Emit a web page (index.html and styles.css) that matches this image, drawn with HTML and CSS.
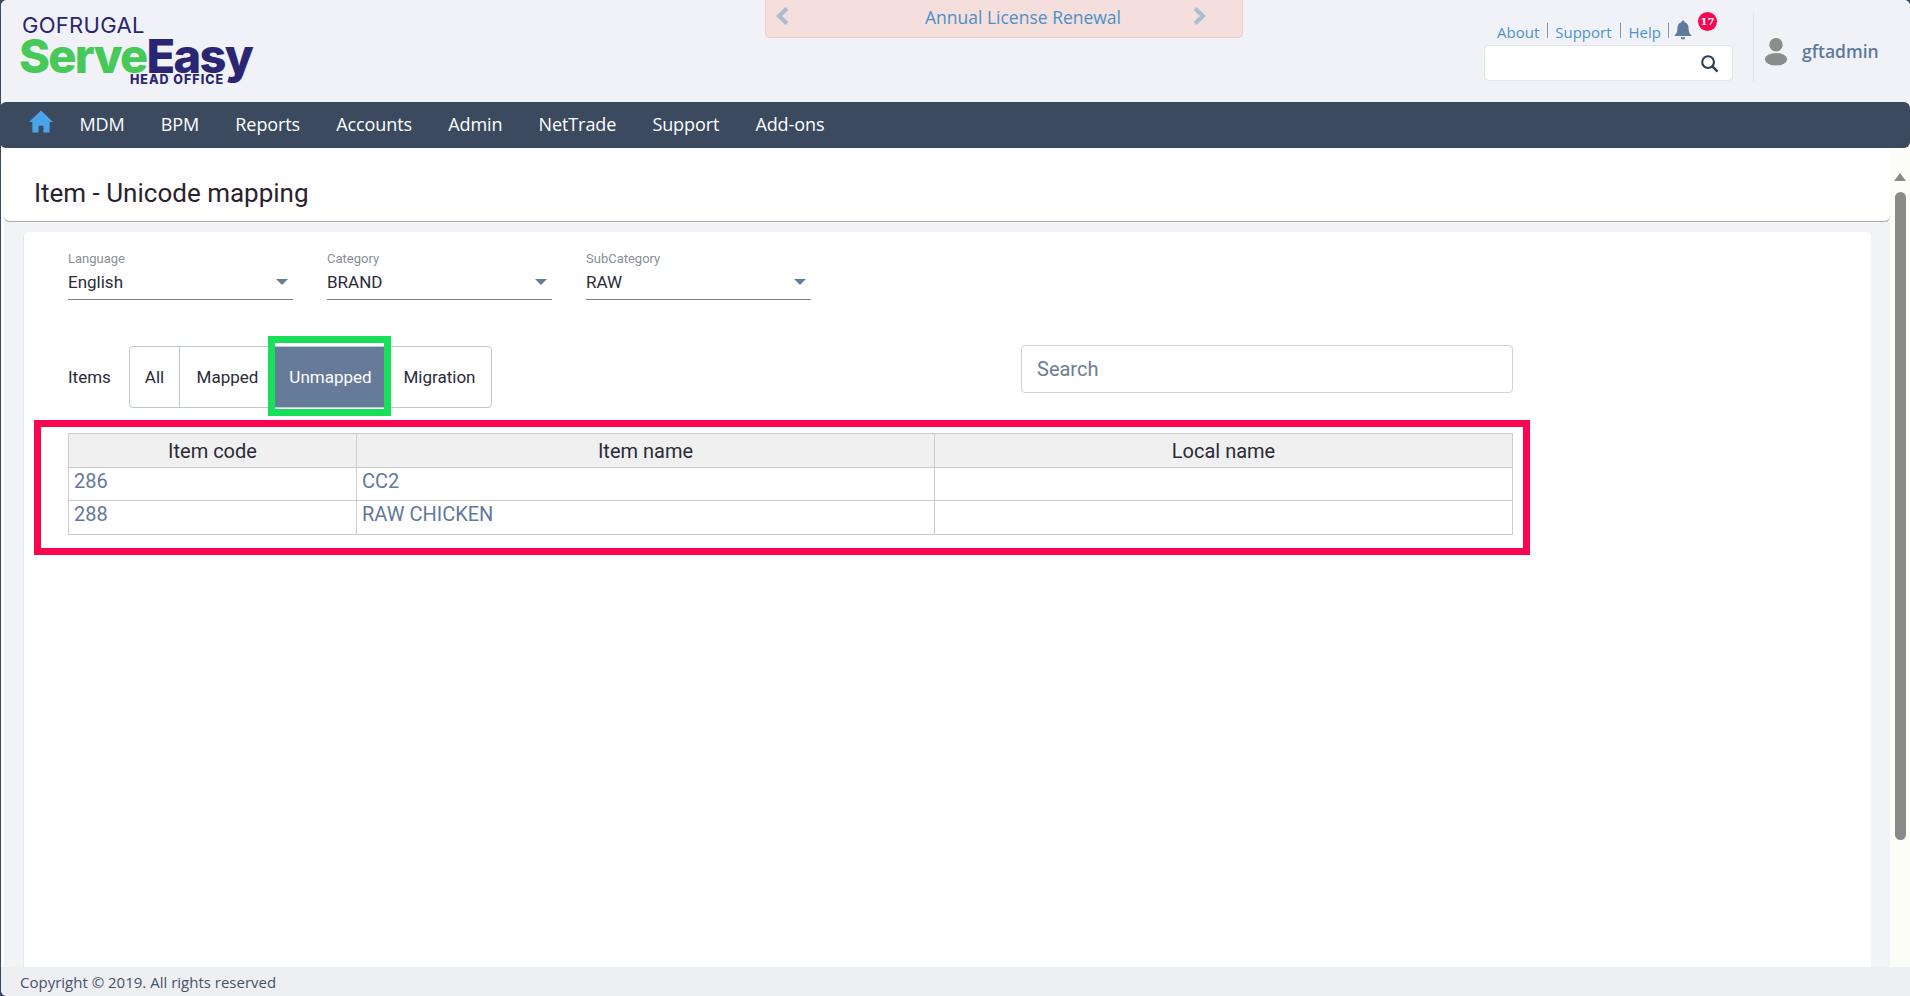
FILE: index.html
```html
<!DOCTYPE html>
<html lang="en">
<head>
<meta charset="utf-8">
<title>Item - Unicode mapping</title>
<link rel="stylesheet" href="styles.css">
</head>
<body>
<div class="app">
  <header class="topbar">
    <div class="logo">
      <div class="logo-brand">GOFRUGAL</div>
      <div class="logo-name"><span class="logo-serve">Serve</span><span class="logo-easy">Easy</span></div>
      <div class="logo-sub">HEAD OFFICE</div>
    </div>
    <div class="notice">
      <svg class="chev" viewBox="0 0 14 18" width="14" height="18"><path d="M11 1.5 3 9l8 7.5" fill="none" stroke="#a9bdd3" stroke-width="4"/></svg>
      <span class="notice-text">Annual License Renewal</span>
      <svg class="chev" viewBox="0 0 14 18" width="14" height="18"><path d="M3 1.5 11 9l-8 7.5" fill="none" stroke="#a9bdd3" stroke-width="4"/></svg>
    </div>
    <div class="top-tools">
      <div class="links">
        <a class="link">About</a><a class="link link-mid">Support</a><a class="link link-last">Help</a>
        <span class="bell-wrap">
          <svg viewBox="0 0 18 20" width="18" height="20"><path d="M9 0.5a1.6 1.6 0 0 1 1.6 1.7C13.4 3 14.6 5.3 14.6 8.4c0 3.4 1 5.1 2.6 6.6v1H.8v-1c1.6-1.5 2.6-3.200 2.600-6.600 0-3.100 1.200-5.400 4-6.200A1.600 1.600 0 0 1 9 .5zM6.800 17.200h4.400A2.200 2.200 0 0 1 9 19.500a2.200 2.200 0 0 1-2.200-2.300z" fill="#5f7a9b"/></svg>
          <span class="badge">17</span>
        </span>
      </div>
      <div class="top-search">
        <svg viewBox="0 0 20 20" width="19" height="19"><circle cx="8.500" cy="8.500" r="6.200" fill="none" stroke="#2c3e50" stroke-width="2.200"/><path d="m13 13 5.500 5.500" stroke="#2c3e50" stroke-width="2.600" fill="none"/></svg>
      </div>
    </div>
    <div class="user">
      <svg viewBox="0 0 24 30" width="24" height="29"><circle cx="12" cy="8" r="7" fill="#8c8c8c"/><ellipse cx="12" cy="23" rx="11.500" ry="6.500" fill="#8c8c8c"/></svg>
      <span class="user-name">gftadmin</span>
    </div>
  </header>

  <nav class="navbar">
    <svg class="home" viewBox="0 0 26 24" width="26" height="23"><path d="M13 0.500 0.500 12.500h3.500V23.500h6.500v-7h5v7H22V12.500h3.500z" fill="#4ba3ea"/></svg>
    <a class="nav-item">MDM</a>
    <a class="nav-item">BPM</a>
    <a class="nav-item">Reports</a>
    <a class="nav-item">Accounts</a>
    <a class="nav-item">Admin</a>
    <a class="nav-item">NetTrade</a>
    <a class="nav-item">Support</a>
    <a class="nav-item">Add-ons</a>
  </nav>

  <div class="body-row">
    <main class="main">
      <div class="title-card"><h1 class="title">Item - Unicode mapping</h1></div>
      <div class="panel-wrap">
        <section class="panel">
          <div class="filters">
            <div class="field">
              <div class="field-label">Language</div>
              <div class="field-control"><span>English</span><i class="caret"></i></div>
            </div>
            <div class="field">
              <div class="field-label">Category</div>
              <div class="field-control"><span>BRAND</span><i class="caret"></i></div>
            </div>
            <div class="field">
              <div class="field-label">SubCategory</div>
              <div class="field-control"><span>RAW</span><i class="caret"></i></div>
            </div>
          </div>

          <div class="toolbar">
            <span class="items-label">Items</span>
            <div class="tabs">
              <span class="tab tab-all">All</span>
              <span class="tab tab-mapped">Mapped</span>
              <span class="tab tab-active">Unmapped<b class="mark mark-green"></b></span>
              <span class="tab tab-migration">Migration</span>
            </div>
            <div class="search-box">Search</div>
          </div>

          <div class="table-wrap">
            <table class="grid">
              <colgroup><col class="col-code"><col class="col-name"><col class="col-local"></colgroup>
              <thead><tr><th>Item code</th><th>Item name</th><th>Local name</th></tr></thead>
              <tbody>
                <tr><td>286</td><td>CC2</td><td></td></tr>
                <tr><td>288</td><td>RAW CHICKEN</td><td></td></tr>
              </tbody>
            </table>
            <b class="mark mark-red"></b>
          </div>
        </section>
      </div>
    </main>
    <div class="scrollbar">
      <i class="scroll-up"></i>
      <i class="scroll-thumb"></i>
    </div>
  </div>

  <footer class="footer">Copyright © 2019. All rights reserved</footer>
</div>
</body>
</html>
```
FILE: styles.css
```css
* { box-sizing: border-box; }
html, body { margin: 0; height: 100%; overflow: hidden; }
body { background: #3c4a60; font-family: "Open Sans", sans-serif; }

.app {
  height: 996px;
  margin-left: 1px;
  display: flex;
  flex-direction: column;
  background: #fff;
  border-radius: 6px 6px 0 6px;
  overflow: hidden;
}

/* top bar */
.topbar {
  height: 102px;
  flex: none;
  background: #f0f2f7;
  display: flex;
  position: relative;
  padding-left: 17px;
}
.logo { width: 747px; position: relative; flex: none; }
.logo-brand {
  position: absolute; left: 4px; top: 17px;
  font: 400 22px/16px "Inter", sans-serif;
  letter-spacing: 0.300px;
  color: #2a2674;
}
.logo-name {
  position: absolute; left: 1px; top: 37px;
  font: 800 47px/37px "Inter", sans-serif;
  letter-spacing: -1.700px;
  white-space: nowrap;
}
.logo-serve { color: #47c95a; }
.logo-easy { color: #2a2674; }
.logo-sub {
  position: absolute; left: 112px; top: 75px;
  font: 800 12.500px/10px "Inter", sans-serif;
  letter-spacing: 1px;
  color: #2a2674;
}
.notice {
  width: 478px;
  height: 38px;
  flex: none;
  background: #f4dfdc;
  border: 1px solid #eecfc0;
  border-top: 0;
  border-radius: 0 0 5px 5px;
  display: flex;
  align-items: center;
  padding: 0 36px 4px 10px;
  justify-content: space-between;
}
.chev { margin-top: -2px; }
.notice-text { color: #4b90c8; font-size: 17.500px; margin-left: 64px; }

.top-tools {
  margin-left: 241px;
  width: 249px;
  flex: none;
  display: flex;
  flex-direction: column;
}
.links {
  height: 45px;
  display: flex;
  align-items: flex-start;
  padding: 23px 0 0 13px;
  font-size: 15px;
  line-height: 18px;
  position: relative;
}
.link { color: #4d93cb; padding-right: 8px; margin-right: 7px; border-right: 1px solid #8a96a5; height: 15px; line-height: 18px; }
.link-mid { margin-right: 8px; }
.link-last { margin-right: 5px; padding-right: 7px; }
.bell-wrap { position: relative; margin-top: -3px; }
.badge {
  position: absolute;
  left: 24px; top: -8px;
  width: 19px; height: 19px;
  border-radius: 50%;
  background: #f7074f;
  color: #fff;
  font: 700 10px/19px "DejaVu Serif", serif;
  text-align: center;
}
.top-search {
  height: 36px;
  width: 249px;
  background: #fff;
  border: 1px solid #e2e6ec;
  border-radius: 5px;
  display: flex;
  align-items: center;
  justify-content: flex-end;
  padding-right: 13px;
}
.user {
  margin: 12px 0 0 20px;
  height: 70px;
  border-left: 1px solid #dfe5ec;
  display: flex;
  align-items: center;
  padding: 8px 0 0 10px;
  gap: 14px;
  flex: none;
}
.user-name { color: #5d7a9c; font-size: 17.500px; font-weight: 600; }

/* nav */
.navbar {
  height: 46px;
  flex: none;
  background: #3c4a60;
  display: flex;
  align-items: center;
  padding: 0 0 2px 28px;
  border-radius: 6px;
  margin-left: -1px;
}
.home { margin-right: 7.400px; margin-top: -5px; }
.nav-item { color: #fff; font-size: 18px; padding: 0 18.100px; letter-spacing: -0.100px; }

/* body */
.body-row { flex: 1; display: flex; min-height: 0; }
.main { flex: 1; display: flex; flex-direction: column; padding-top: 15px; padding-left: 3px; min-width: 0; }
.title-card {
  height: 59px;
  flex: none;
  background: #fff;
  border-radius: 0 0 6px 6px;
  border-bottom: 1px solid #a9adb3;
  box-shadow: 0 1px 1px #c8ccd2;
  padding: 1px 0 0 30px;
  display: flex;
  align-items: center;
}
.title { margin: 0; font: 400 26px/30px "Roboto", sans-serif; color: #2b2230; }
.panel-wrap {
  flex: 1;
  background: #f2f3f6;
  padding: 10px 19px 0 19px;
  display: flex;
  min-height: 0;
}
.panel {
  flex: 1;
  background: #fff;
  border-left: 1px solid #e3e7ee;
  border-radius: 5px 5px 0 0;
  padding: 19px 0 0 44px;
}

/* filters */
.filters { display: flex; gap: 34px; }
.field { width: 225px; }
.field-label { font: 400 13px/16px "Roboto", sans-serif; color: #8a8f98; }
.field-control {
  height: 33px;
  border-bottom: 1px solid #7f8388;
  display: flex;
  align-items: center;
  justify-content: space-between;
  font: 400 17px/22px "Roboto", sans-serif;
  color: #2b2b38;
  padding: 0 5px 2px 0;
}
.caret { width: 0; height: 0; border: 6.500px solid transparent; border-top: 6.500px solid #667a99; border-bottom: 0; }

/* toolbar */
.toolbar { display: flex; width: 1445px; margin-top: 45px; align-items: flex-start; position: relative; }
.items-label { font: 400 17px/62px "Roboto", sans-serif; color: #2b2b38; width: 61px; margin-top: 1px; }
.tabs {
  display: flex;
  height: 62px;
  margin-top: 1px;
  border: 1px solid #bcc8d6;
  border-radius: 4px;
  background: #fff;
  font: 400 17px/61px "Roboto", sans-serif;
  color: #2b2b38;
}
.tab { display: block; text-align: center; }
.tab-all { width: 50px; border-right: 1px solid #bcc8d6; }
.tab-mapped { width: 95px; }
.tab-active { width: 109px; background: #667a99; color: #fff; position: relative; padding-left: 2px; }
.tab-migration { width: 107px; padding-left: 4px; }
.search-box {
  margin-left: auto;
  width: 492px;
  height: 48px;
  border: 1px solid #cfd2d6;
  border-radius: 4px;
  font: 400 20px/47px "Roboto", sans-serif;
  color: #6b7d94;
  padding-left: 15px;
}
.mark { position: absolute; display: block; pointer-events: none; }
.mark-green { left: -7px; right: -7px; top: -11px; bottom: -9px; border: 7px solid #18e05a; }

/* table */
.table-wrap { position: relative; width: 1444px; margin-top: 25px; }
.grid { width: 1444px; border-collapse: collapse; table-layout: fixed; font-family: "Roboto", sans-serif; }
.col-code { width: 288px; }
.col-name { width: 578px; }
.col-local { width: 578px; }
.grid th, .grid td { border: 1px solid #ccc; padding: 0 5px; height: 33px; font-size: 20px; font-weight: 400; line-height: 22px; }
.grid th { background: #f0f0f0; color: #2b2b38; height: 34px; text-align: center; }
.grid td { color: #62799a; vertical-align: top; padding-top: 2px; }
.grid tr:last-child td { height: 34px; }
.mark-red { left: -34px; right: -18px; top: -13px; bottom: -20px; border: 7px solid #fb0450; }

/* scrollbar */
.scrollbar {
  width: 20px;
  flex: none;
  background: #fdfdf8;
  position: relative;
  display: flex;
  flex-direction: column;
  align-items: center;
  padding-top: 25px;
}
.scroll-up { width: 0; height: 0; border: 6px solid transparent; border-bottom: 8px solid #8a8a8a; border-top: 0; }
.scroll-thumb { width: 11px; height: 648px; margin-top: 11px; background: #8a8a8a; border-radius: 6px; }

/* footer */
.footer {
  height: 29px;
  flex: none;
  background: #eeeff2;
  font-size: 15px;
  line-height: 31px;
  color: #46536a;
  padding-left: 19px;
}
```
